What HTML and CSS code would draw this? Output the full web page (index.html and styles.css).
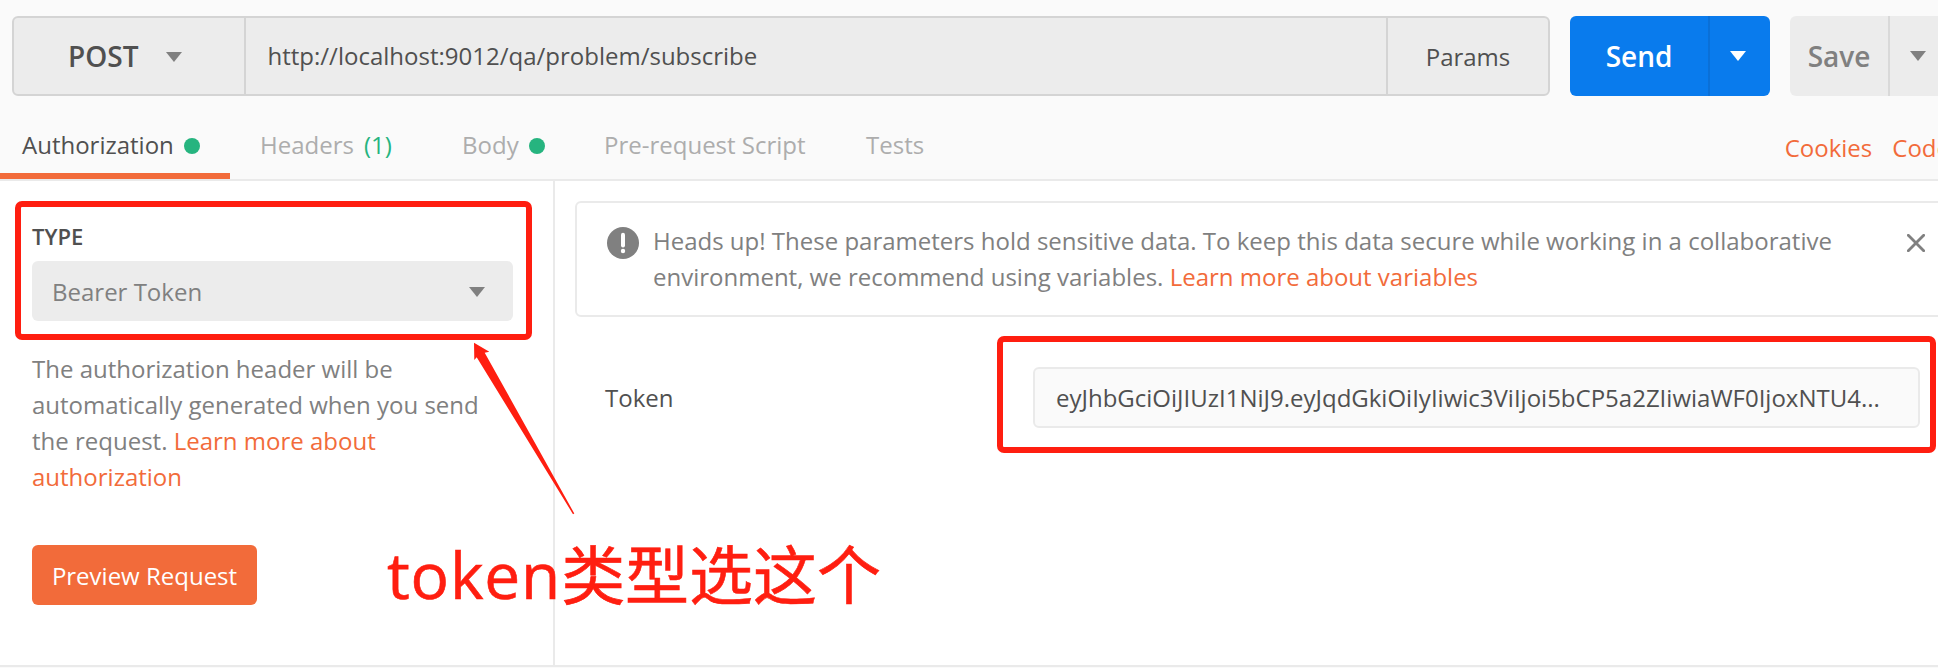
FILE: index.html
```html
<!DOCTYPE html>
<html lang="en">
<head>
<meta charset="utf-8">
<title>Request builder</title>
<link rel="stylesheet" href="styles.css">
</head>
<body>
<div class="app">
  <header class="request-bar">
    <div class="address">
      <div class="method"><span>POST</span><i class="caret"></i></div>
      <div class="url">http://localhost:9012/qa/problem/subscribe</div>
      <div class="params">Params</div>
    </div>
    <div class="split send"><span class="split-label">Send</span><span class="split-toggle"><i class="caret"></i></span></div>
    <div class="split save"><span class="split-label">Save</span><span class="split-toggle"><i class="caret"></i></span></div>
  </header>
  <nav class="tabs">
    <a class="tab tab-auth active">Authorization<i class="dot"></i></a>
    <a class="tab tab-headers">Headers<span class="count">(1)</span></a>
    <a class="tab tab-body">Body<i class="dot"></i></a>
    <a class="tab tab-script">Pre-request Script</a>
    <a class="tab tab-tests">Tests</a>
    <div class="tab-links"><a>Cookies</a><a>Code</a></div>
  </nav>
  <main class="panel">
    <aside class="auth-type">
      <div class="type-label">TYPE</div>
      <div class="select"><span>Bearer Token</span><i class="caret"></i></div>
      <p class="help">The authorization header will be automatically generated when you send the request. <a>Learn more about authorization</a></p>
      <button class="preview">Preview Request</button>
    </aside>
    <section class="auth-detail">
      <div class="notice">
        <svg class="notice-icon" width="32" height="32" viewBox="0 0 32 32"><circle cx="16" cy="16" r="16" fill="#808080"/><path d="M16 7.8v10.6" stroke="#fff" stroke-width="4" stroke-linecap="round"/><circle cx="16" cy="24" r="2.2" fill="#fff"/></svg>
        <p class="notice-text">Heads up! These parameters hold sensitive data. To keep this data secure while working in a collaborative<br>environment, we recommend using variables. <a>Learn more about variables</a></p>
        <svg class="close" width="18" height="18" viewBox="0 0 18 18"><path d="M1.3 1.3 16.7 16.7M16.7 1.3 1.3 16.7" stroke="#808080" stroke-width="2.8" stroke-linecap="round"/></svg>
      </div>
      <div class="field">
        <label>Token</label>
        <div class="input">eyJhbGciOiJIUzI1NiJ9.eyJqdGkiOiIyIiwic3ViIjoi5bCP5a2ZIiwiaWF0IjoxNTU4...</div>
      </div>
    </section>
  </main>
  <div class="mark mark-type"></div>
  <div class="mark mark-token"></div>
  <svg class="mark-arrow" width="102" height="173" viewBox="0 0 102 173"><path d="M1 .7 16.300 9.700 11.700 10.700 101.300 171.500 100 172.200 3.700 15.300 1.300 18Z" fill="#ff1e10"/></svg>
  <div class="mark-text"><span class="latin">token</span>类型选这个</div>
</div>
</body>
</html>
```

FILE: styles.css
```css
* { box-sizing: border-box; }
body { margin: 0; font-family: "Open Sans", "Noto Sans", sans-serif; font-size: 24px; color: #505050; background: #fafafa; }
.app { position: relative; width: 1938px; height: 668px; overflow: hidden; white-space: nowrap; }
p { margin: 0; }
a { color: #f26b3a; }

.caret { flex: none; width: 16px; height: 10px; background: #808080; clip-path: polygon(0 0, 100% 0, 50% 100%); }
.dot { width: 16px; height: 16px; border-radius: 50%; background: #26b47f; }

.request-bar { display: flex; gap: 20px; width: 2000px; height: 96px; padding: 16px 0 0 12px; }
.address { display: flex; width: 1538px; height: 80px; border: 2px solid #d4d4d4; border-radius: 6px; background: #ececec; }
.method { display: flex; align-items: center; width: 232px; padding-left: 54px; gap: 27.5px; border-right: 2px solid #d4d4d4; font-size: 28px; font-weight: 600; }
.method .caret { margin-top: 2px; }
.url { flex: 1; padding-left: 21.5px; line-height: 76px; }
.params { width: 162px; border-left: 2px solid #d4d4d4; text-align: center; line-height: 78px; }
.split { display: flex; width: 200px; height: 80px; border-radius: 6px; font-size: 28px; font-weight: 600; line-height: 80px; text-align: center; }
.split-label { width: 138px; }
.split-toggle { flex: 1; display: flex; align-items: center; justify-content: center; border-left: 2px solid #d9d9d9; }
.send { background: #097bed; color: #fff; }
.send .split-toggle { border-color: #0a70d8; padding-right: 4px; }
.send .caret { background: #fff; }
.save { background: #ececec; color: #808080; width: 160px; }
.save .split-label { width: 98px; }
.save .split-toggle { padding-right: 4px; }

.tabs { display: flex; height: 85px; border-bottom: 2px solid #eaeaea; }
.tab { display: flex; align-items: center; height: 83px; padding-top: 14px; color: #adadad; }
.tab .dot { margin: 3px 0 0 10px; }
.tab-auth { width: 230px; padding-left: 22px; padding-top: 20px; border-bottom: 6px solid #f26b3a; }
.tab.active { color: #505050; }
.tab-headers { width: 202px; margin-left: 30px; }
.count { margin-left: 10px; color: #26b47f; }
.tab-body { width: 142px; }
.tab-script { width: 262px; }
.tab-links { display: flex; gap: 20px; margin-left: auto; margin-right: -12px; padding-top: 35px; line-height: 33px; }

.panel { display: flex; height: 486px; background: #fff; border-bottom: 2px solid #eaeaea; }
.auth-type { flex: none; width: 555px; border-right: 2px solid #eaeaea; padding: 40px 38px 0 32px; color: #808080; }
.type-label { height: 40px; line-height: 31px; font-size: 22px; font-weight: 600; color: #505050; }
.select { display: flex; align-items: center; justify-content: space-between; width: 481px; height: 60px; padding: 0 28px 0 20px; border-radius: 6px; background: #ececec; }
.select .caret { margin-top: 2px; }
.help { width: 460px; margin-top: 30px; line-height: 36px; white-space: normal; }
.preview { display: block; width: 225px; height: 60px; margin-top: 50px; padding: 0; border: 0; border-radius: 6px; background: #f26b3a; color: #fff; font: inherit; }
.auth-detail { flex: none; padding: 20px 0 0 20px; }
.notice { display: flex; align-items: flex-start; width: 1400px; height: 116px; padding: 22px 0 0 30px; border: 2px solid #eaeaea; border-radius: 6px; color: #808080; }
.notice-icon { margin: 2px 14px 0 0; }
.notice-text { width: 1254px; line-height: 36px; margin-top: -2px; }
.close { margin-top: 9px; }
.field { display: flex; align-items: center; height: 61px; margin: 50px 0 0 30px; }
.field label { width: 428px; }
.input { width: 887px; height: 61px; padding-left: 21px; line-height: 58px; border: 2px solid #eaeaea; border-radius: 6px; background: #fafafa; }

.mark { position: absolute; border: 6px solid #ff1e10; border-radius: 7px; }
.mark-type { left: 15px; top: 201px; width: 517px; height: 139px; }
.mark-token { left: 997px; top: 336px; width: 939px; height: 117px; }
.mark-arrow { position: absolute; left: 473px; top: 342px; }
.mark-text { position: absolute; left: 387px; top: 527px; font: 64px/96px "Open Sans", "Noto Sans CJK SC", sans-serif; color: #ff1e10; -webkit-text-stroke: 0.6px #ff1e10; }
.latin { letter-spacing: 0.8px; }
```
